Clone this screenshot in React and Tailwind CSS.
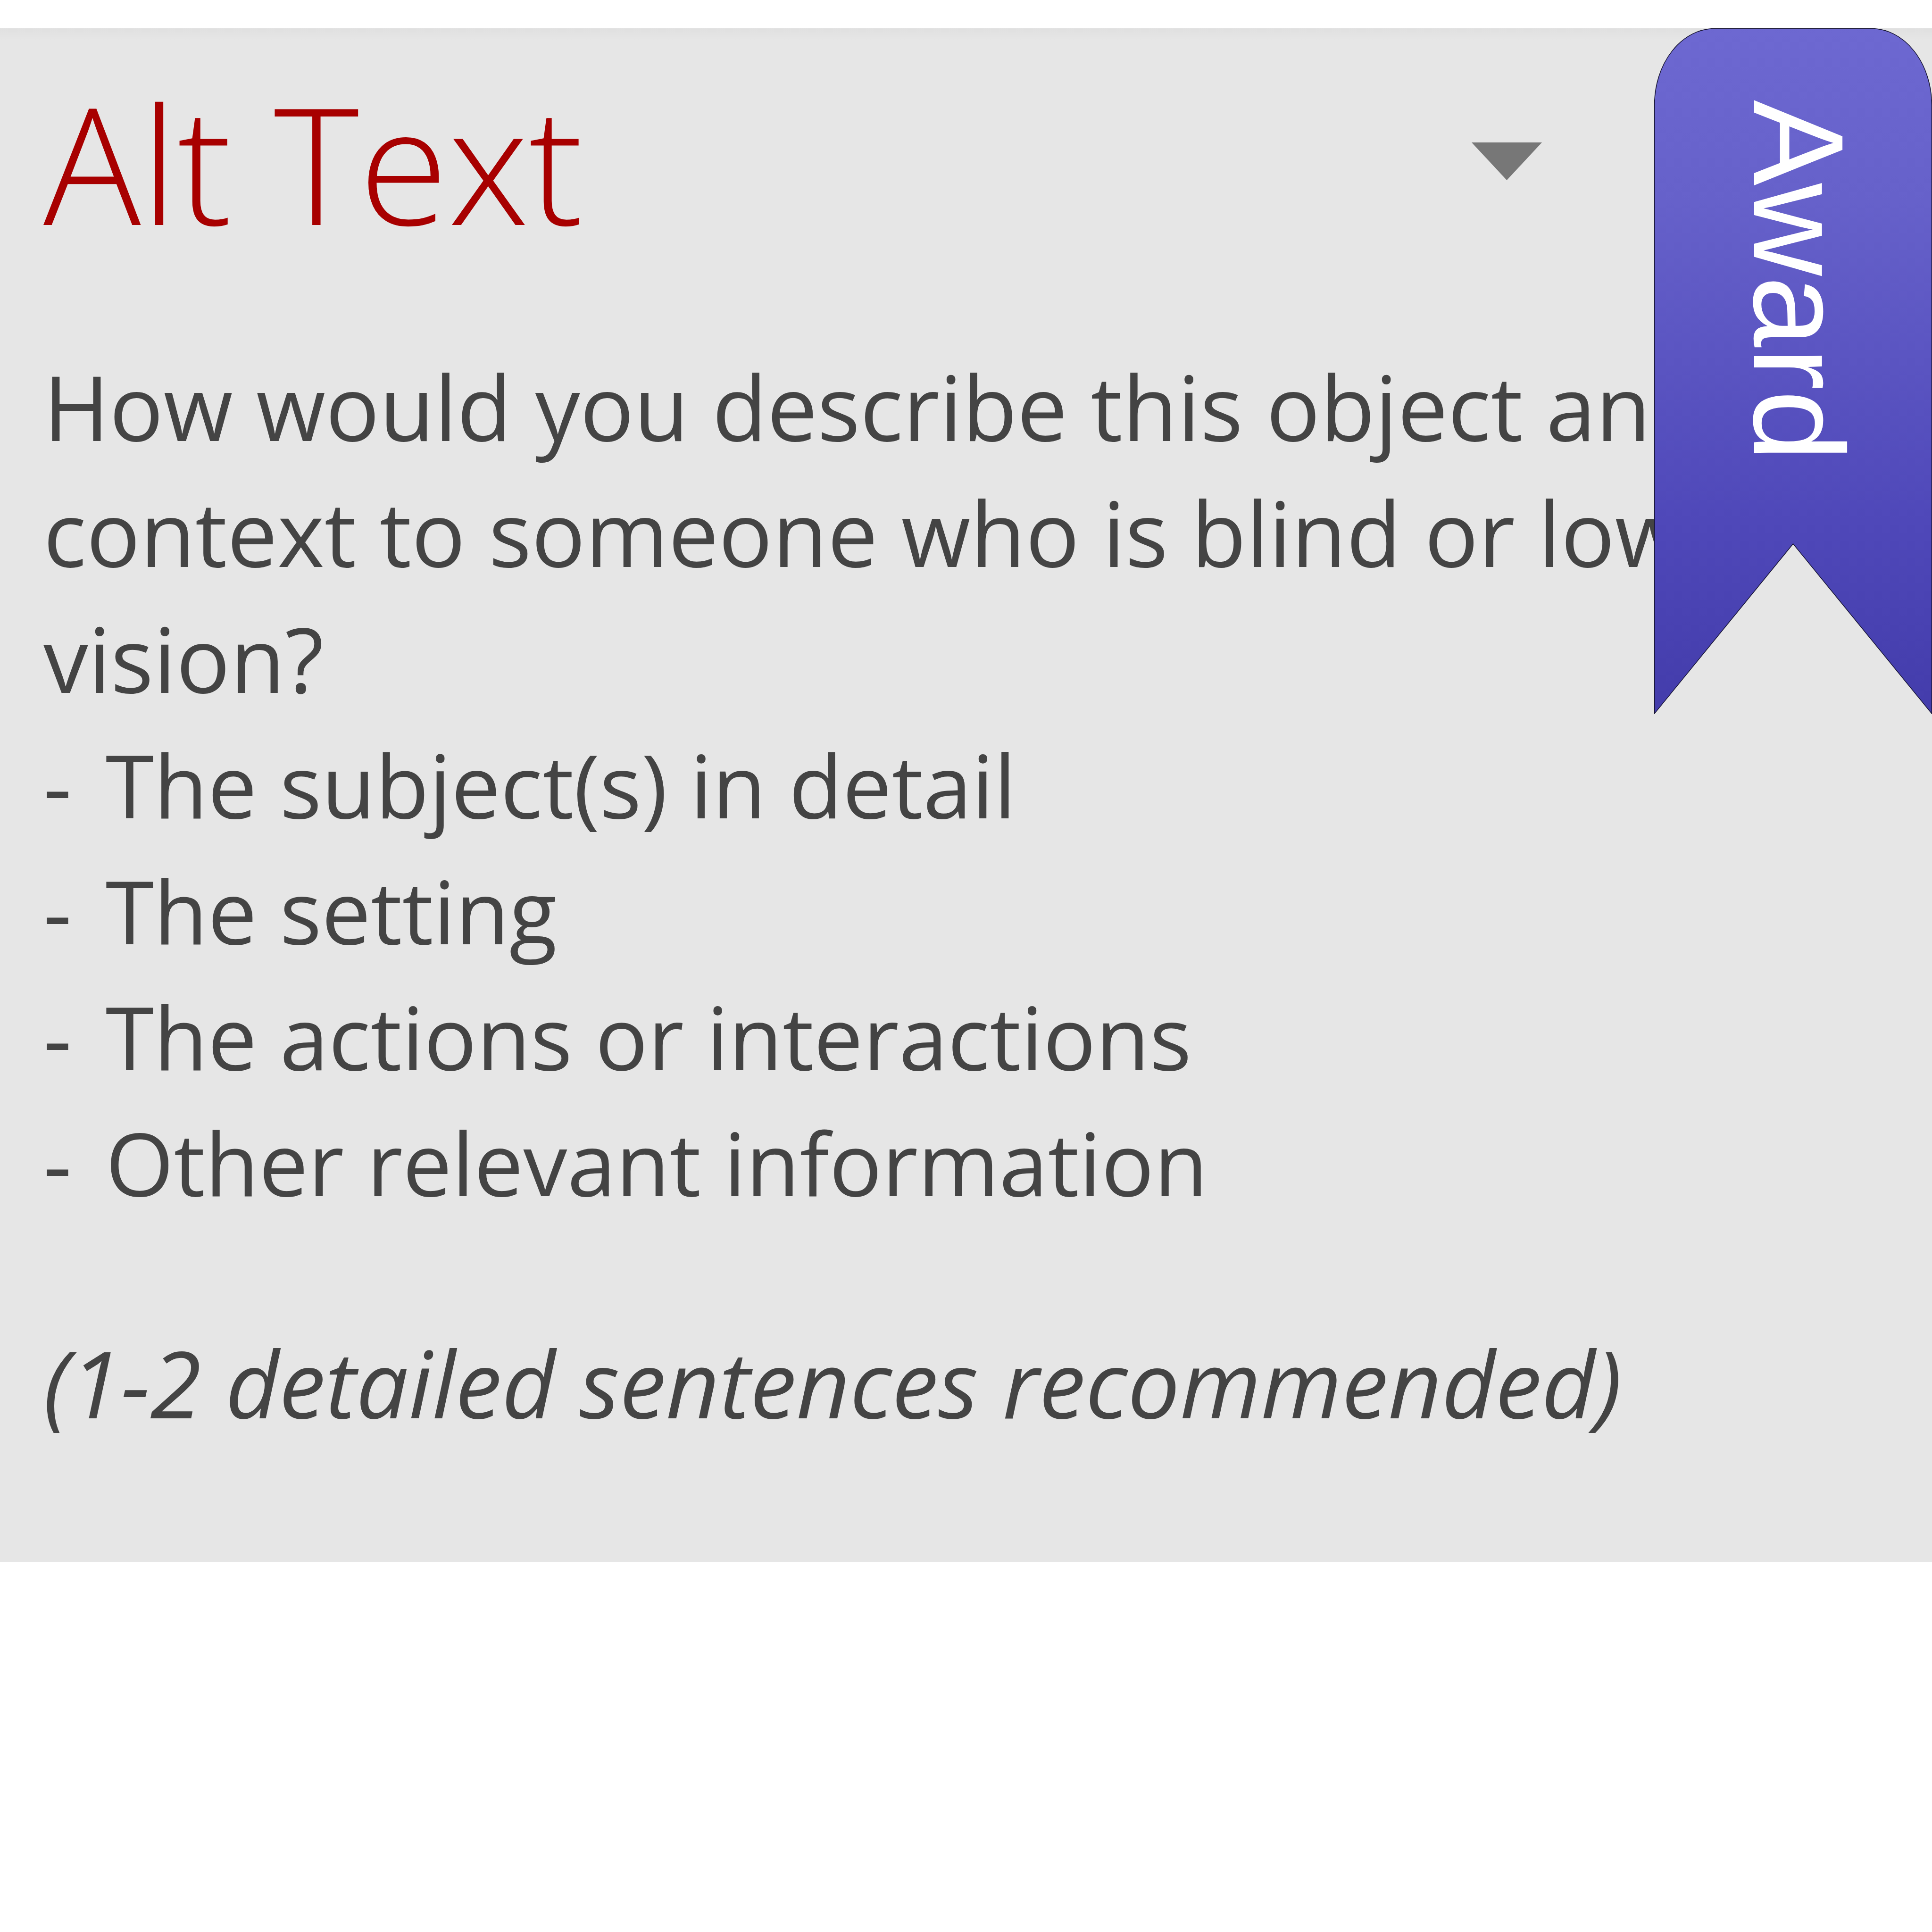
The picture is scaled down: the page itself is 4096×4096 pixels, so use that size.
const prompts = [
  "The subject(s) in detail",
  "The setting",
  "The actions or interactions",
  "Other relevant information",
];

function Ribbon() {
  return (
    <div className="absolute top-0 right-0 h-[1454px] w-[589px]">
      <svg viewBox="0 0 589 1454" className="block h-full w-full" aria-hidden="true">
        <defs>
          <linearGradient id="ribbon" x1="0" y1="0" x2="0" y2="1">
            <stop offset="0" stopColor="#6d68d1" />
            <stop offset="0.25" stopColor="#6661ca" />
            <stop offset="0.72" stopColor="#4f48b9" />
            <stop offset="1" stopColor="#433cab" />
          </linearGradient>
        </defs>
        <path
          d="M0.5 1453V163A128 162.500 0 0 1 128.500 0.5H460.500A128 162.500 0 0 1 588.500 163V1453L294.500 1093Z"
          fill="url(#ribbon)"
          stroke="#14122f"
          strokeWidth="1.500"
        />
      </svg>
      <span className="absolute top-[152px] left-[150px] font-['Liberation_Sans',sans-serif] text-[272px] leading-[312px] text-white [writing-mode:vertical-rl]">
        Award
      </span>
    </div>
  );
}

export default function App() {
  return (
    <div className="min-h-screen bg-white pt-[60px]">
      <main className="relative overflow-hidden bg-[#e6e6e6] bg-[linear-gradient(#e0e0e0,#e6e6e6_25px)] pb-[248px] pl-[92px] font-['Open_Sans',sans-serif] text-[#444444]">
        <header className="flex items-start justify-between pt-[84px] pr-[827px]">
          <h1 className="text-[344px] leading-[400px] font-[350] whitespace-nowrap text-[#a80000]">
            Alt Text
          </h1>
          <button type="button" aria-label="Alt Text options" className="mt-[158px]">
            <svg viewBox="0 0 149 80" className="block h-[80px] w-[149px]" aria-hidden="true">
              <path d="M0 0H149L74.500 80Z" fill="#777777" />
            </svg>
          </button>
        </header>
        <section className="mt-[184px] text-[190px] leading-[267px] whitespace-nowrap">
          <p>
            How would you describe this object and its
            <br />
            context to someone who is blind or low
            <br />
            vision?
          </p>
          <ul className="text-[186px]">
            {prompts.map((text) => (
              <li key={text} className="flex gap-[72px]">
                <span>-</span>
                <span>{text}</span>
              </li>
            ))}
          </ul>
          <p className="mt-[200px] text-[197px] italic">(1-2 detailed sentences recommended)</p>
        </section>
        <Ribbon />
      </main>
    </div>
  );
}
